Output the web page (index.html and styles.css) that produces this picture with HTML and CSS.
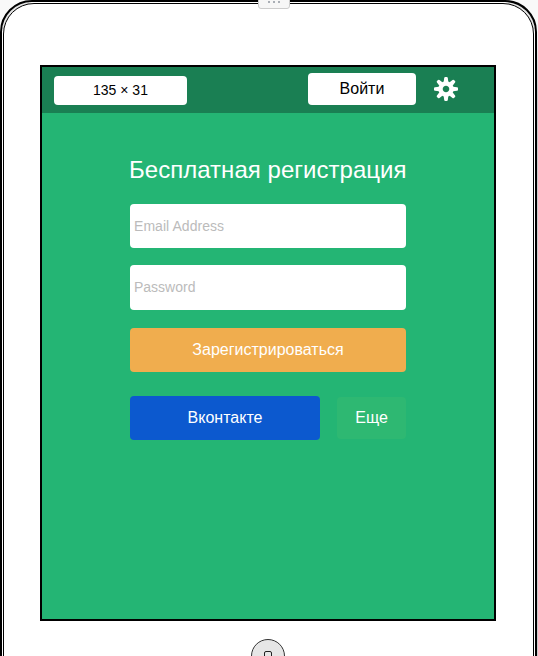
FILE: index.html
```html
<!DOCTYPE html>
<html lang="ru">
<head>
<meta charset="utf-8">
<title>Бесплатная регистрация</title>
<link rel="stylesheet" href="styles.css">
</head>
<body>
<div class="viewport">
  <div class="device">
    <div class="bezel">
      <main class="screen">
        <header class="topbar">
          <div class="size">135 × 31</div>
          <button class="login">Войти</button>
          <svg class="gear" viewBox="-12 -12 24 24" aria-hidden="true">
            <defs><path id="tooth" d="M-2.3-7 L-1.8-11 Q-1.6-12 -.8-12 H.8 Q1.6-12 1.8-11 L2.3-7Z"/></defs>
            <g fill="#fff">
              <use href="#tooth"/>
              <use href="#tooth" transform="rotate(45)"/>
              <use href="#tooth" transform="rotate(90)"/>
              <use href="#tooth" transform="rotate(135)"/>
              <use href="#tooth" transform="rotate(180)"/>
              <use href="#tooth" transform="rotate(225)"/>
              <use href="#tooth" transform="rotate(270)"/>
              <use href="#tooth" transform="rotate(315)"/>
            </g>
            <circle r="5.5" fill="none" stroke="#fff" stroke-width="4.4"/>
          </svg>
        </header>
        <form class="signup">
          <h1>Бесплатная регистрация</h1>
          <input class="email" type="email" placeholder="Email Address">
          <input class="password" type="password" placeholder="Password">
          <button class="register" type="button">Зарегистрироваться</button>
          <div class="social">
            <button class="vk" type="button">Вконтакте</button>
            <button class="more" type="button">Еще</button>
          </div>
        </form>
      </main>
      <div class="home"><span class="home-mark"></span></div>
    </div>
  </div>
  <div class="handle"><i></i><i></i><i></i></div>
</div>
</body>
</html>
```
FILE: styles.css
```css
* { box-sizing: border-box; }
body {
  margin: 0;
  background: #fff;
  font-family: "Liberation Sans", Arial, sans-serif;
}
.viewport {
  position: relative;
  height: 656px;
  overflow: hidden;
  padding-right: 1px;
  background: linear-gradient(#f9f9f9, #f9f9f9 30px, #ccc 90px);
}
.device {
  height: 720px;
  padding: 1px;
  border: 2px solid #000;
  border-radius: 32px;
  background:
    linear-gradient(#e4e4e4, #e4e4e4) 0 0 / 27px 27px no-repeat,
    linear-gradient(#e4e4e4, #e4e4e4) 100% 0 / 27px 27px no-repeat,
    #fff;
}
.bezel {
  height: 100%;
  padding: 61px 37px 0 36px;
  border: 1px solid #000;
  border-radius: 31px;
  background: #fff;
}
.screen {
  width: 456px;
  height: 556px;
  border: 2px solid #000;
  background: #24b574;
}
.topbar {
  display: flex;
  align-items: flex-start;
  height: 46px;
  padding: 6px 0 0 12px;
  background: #1a7f53;
}
button, input {
  margin: 0;
  padding: 0;
  border: 0;
  border-radius: 4px;
  font: 16px "Liberation Sans", Arial, sans-serif;
}
.size {
  width: 133px;
  height: 29px;
  margin-top: 3px;
  border-radius: 4px;
  background: #fff;
  font-size: 14px;
  line-height: 29px;
  text-align: center;
  color: #000;
}
.login {
  width: 108px;
  height: 32px;
  margin-left: 121px;
  background: #fff;
  color: #000;
}
.gear {
  width: 24px;
  height: 24px;
  margin: 4px 0 0 18px;
}
.signup {
  display: flex;
  flex-direction: column;
  width: 276px;
  margin: 40px 0 0 88px;
}
h1 {
  height: 34px;
  margin: 0 0 17px -1px;
  font-size: 24px;
  font-weight: 400;
  letter-spacing: .03px;
  line-height: 34px;
  white-space: nowrap;
  color: #fff;
}
input {
  height: 44px;
  padding: 0 4px;
  background: #fff;
  font-size: 14px;
}
input::placeholder { color: #bbb; }
.email { letter-spacing: .05px; }
.password {
  height: 45px;
  margin-top: 17px;
  padding-bottom: 2px;
}
.register {
  height: 44px;
  margin-top: 18px;
  background: #f0ad4e;
  color: #fff;
}
.social {
  display: flex;
  align-items: center;
  justify-content: space-between;
  margin-top: 24px;
}
.vk {
  width: 190px;
  height: 44px;
  background: #0c59cf;
  color: #fff;
}
.more {
  width: 69px;
  height: 42px;
  background: #2eb872;
  color: #fff;
}
.home {
  display: flex;
  justify-content: center;
  width: 34px;
  height: 34px;
  margin: 18px 0 0 211px;
  padding-top: 11px;
  border: 1px solid #333;
  border-radius: 50%;
  background: #e6e6e6;
}
.home-mark {
  width: 8px;
  height: 8px;
  border: 1px solid #222;
  border-radius: 2px;
}
.handle {
  position: absolute;
  top: -4px;
  left: 258px;
  display: flex;
  justify-content: center;
  gap: 3px;
  width: 32px;
  height: 13px;
  padding-top: 4px;
  border: 1px solid #ccc;
  border-radius: 3px;
  background: #f6f6f6;
}
.handle i {
  width: 2px;
  height: 2px;
  background: #a9aeb5;
}
```
